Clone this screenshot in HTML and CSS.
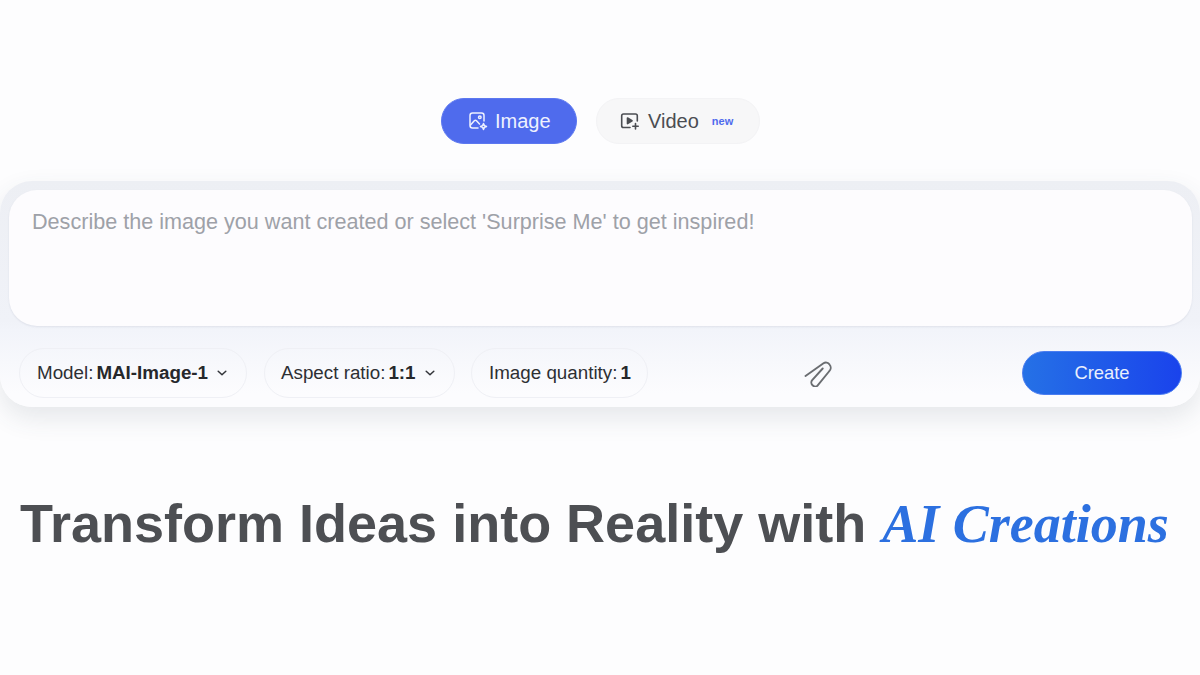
FILE: index.html
```html
<!DOCTYPE html>
<html lang="en">
<head>
<meta charset="utf-8">
<title>AI Creations</title>
<link rel="stylesheet" href="styles.css">
</head>
<body>
<main class="page">
  <nav class="tabs">
    <button class="tab tab-active">
      <svg class="tab-icon" viewBox="0 0 20 20" fill="none" stroke="currentColor" stroke-width="1.5" stroke-linecap="round" stroke-linejoin="round"><path d="M10 17H4.500A2.500 2.500 0 0 1 2 14.500V4.500A2.500 2.500 0 0 1 4.500 2h9A2.500 2.500 0 0 1 16 4.500V10"/><path d="M2.500 14l3.800-4.200a1.500 1.500 0 0 1 2.200 0L11.500 13"/><circle cx="11.800" cy="6.200" r="1.300"/><path d="M15.500 12.500l.9 2.100 2.100.9-2.100.9-.9 2.100-.9-2.100-2.100-.9 2.100-.9z"/></svg>
      <span>Image</span>
    </button>
    <button class="tab tab-video">
      <svg class="tab-icon" viewBox="0 0 20 20" fill="none" stroke="currentColor" stroke-width="1.600" stroke-linecap="round" stroke-linejoin="round"><path d="M10 16.500H3.500A1.800 1.800 0 0 1 1.700 14.700V4.800A1.800 1.800 0 0 1 3.500 3h12a1.800 1.800 0 0 1 1.800 1.800V10"/><path d="M7.500 7l4.500 2.800-4.500 2.800z" fill="currentColor"/><path d="M15.500 12.500v5.500M12.800 15.200h5.400"/></svg>
      <span>Video</span>
      <span class="new-tag">new</span>
    </button>
  </nav>

  <section class="composer">
    <div class="prompt">Describe the image you want created or select 'Surprise Me' to get inspired!</div>
    <div class="toolbar">
      <div class="pills">
        <button class="pill pill-model">Model:<b>MAI-Image-1</b><svg class="chev" viewBox="0 0 10 6" fill="none" stroke="currentColor" stroke-width="1.500" stroke-linecap="round" stroke-linejoin="round"><path d="M1.200 1.200L5 4.800l3.800-3.600"/></svg></button>
        <button class="pill pill-ratio">Aspect ratio:<b>1:1</b><svg class="chev" viewBox="0 0 10 6" fill="none" stroke="currentColor" stroke-width="1.500" stroke-linecap="round" stroke-linejoin="round"><path d="M1.200 1.200L5 4.800l3.800-3.600"/></svg></button>
        <button class="pill pill-qty">Image quantity:<b>1</b></button>
      </div>
      <svg class="clip" viewBox="0 0 28 28" fill="none" stroke="currentColor" stroke-width="1.900" stroke-linecap="round" stroke-linejoin="round"><path d="M1.500 17L19.500 4.200a4.300 4.300 0 0 1 6 1.300 5 5 0 0 1-.5 7L13.500 26.700a3.600 3.600 0 0 1-5-.5 3.600 3.600 0 0 1-.3-5L18.700 9.500"/></svg>
      <button class="create">Create</button>
    </div>
  </section>

  <h1 class="headline">Transform Ideas into Reality with <em>AI Creations</em></h1>
</main>
</body>
</html>
```
FILE: styles.css
```css
* { box-sizing: border-box; }
html, body { margin: 0; height: 100%; }
body {
  background: #fdfdfe;
  font-family: "Liberation Sans", Arial, sans-serif;
  overflow: hidden;
}
button { font-family: inherit; cursor: pointer; }
.page {
  width: 1200px;
  height: 675px;
  padding-top: 98px;
  display: flex;
  flex-direction: column;
}
.tabs {
  display: flex;
  justify-content: flex-start;
  padding-left: 441px;
  gap: 19px;
  height: 46px;
}
.tab {
  height: 46px;
  border-radius: 23px;
  display: flex;
  align-items: center;
  font-size: 20px;
  padding: 0;
}
.tab-active {
  width: 136px;
  background: #4f6bed;
  border: 1px solid #5c78f0;
  color: #eef1fe;
  padding-left: 26px;
  gap: 7px;
}
.tab-video {
  width: 164px;
  background: #f7f7f8;
  border: 1px solid #f3f3f5;
  color: #4b4d52;
  padding-left: 23px;
  gap: 8px;
}
.tab-icon { width: 20px; height: 20px; flex: none; }
.new-tag {
  font-size: 11px;
  font-weight: 700;
  color: #4f6bed;
  margin-left: 5px;
}
.composer {
  margin-top: 37px;
  height: 226px;
  padding: 9px 8px 0 9px;
  border-radius: 32px;
  background: linear-gradient(#edeff4 0, #f0f2f8 62%, #f2f4fa 66%, #fcfcfe 94%);
  box-shadow: 0 11px 26px rgba(60, 70, 90, 0.12);
}
.prompt {
  height: 136px;
  background: #fdfcfe;
  border-radius: 28px;
  padding: 20px 23px;
  font-size: 21.600px;
  line-height: 24px;
  color: #9ea1a8;
  white-space: nowrap;
  box-shadow: 0 1px 2px rgba(90, 100, 130, 0.12);
}
.toolbar {
  display: flex;
  align-items: center;
  margin-top: 22px;
  padding-left: 10px;
  height: 50px;
}
.pills { display: flex; gap: 17px; }
.pill {
  height: 50px;
  border-radius: 25px;
  background: transparent;
  border: 1px solid #eff0f5;
  color: #2d2f33;
  font-size: 18.800px;
  padding: 0 0 0 17px;
  display: flex;
  align-items: center;
  white-space: nowrap;
}
.pill b { margin-left: 3px; font-weight: 700; color: #26282b; }
.pill-model { width: 228px; }
.pill-ratio { width: 191px; padding-left: 16px; }
.pill-qty { width: 177px; margin-left: -1px; }
.chev { width: 10px; height: 6px; margin-left: 9px; color: #33353a; flex: none; }
.clip {
  width: 28px;
  height: 28px;
  color: #6a6d71;
  margin-left: 156px;
  flex: none;
}
.create {
  width: 160px;
  height: 44px;
  margin-left: auto;
  margin-right: 10px;
  border: 1px solid #4a7df0;
  border-radius: 22px;
  background: linear-gradient(90deg, #2571e6, #1a43ec);
  color: #e9effd;
  font-size: 18.400px;
}
.headline {
  margin: 85px 0 0 20px;
  font-size: 54px;
  line-height: 62px;
  font-weight: 700;
  color: #4d4f53;
  white-space: nowrap;
}
.headline em {
  margin-left: 1px;
  font-family: "Liberation Serif", "Times New Roman", serif;
  font-style: italic;
  color: #2c70e0;
}
```
